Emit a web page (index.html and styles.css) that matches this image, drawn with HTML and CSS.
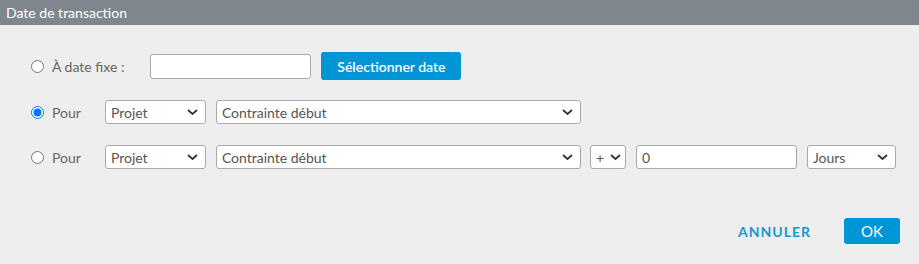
FILE: index.html
```html
<!DOCTYPE html>
<html lang="fr">
<head>
<meta charset="utf-8">
<title>Date de transaction</title>
<link rel="stylesheet" href="styles.css">
</head>
<body>
<div class="dialog">
  <div class="header">Date de transaction</div>
  <div class="content">
    <div class="row row-fixed">
      <input type="radio" name="mode" class="radio">
      <span class="label">À date fixe :</span>
      <div class="field w-date"></div>
      <button class="btn btn-primary btn-select">Sélectionner date</button>
    </div>
    <div class="row">
      <input type="radio" name="mode" class="radio" checked>
      <span class="label">Pour</span>
      <div class="select w-projet"><span>Projet</span><svg class="chev" width="11" height="6" viewBox="0 0 11 6"><path d="M1 1l4.5 4 4.5-4" fill="none" stroke="#333" stroke-width="1.8"/></svg></div>
      <div class="select w-contrainte"><span>Contrainte début</span><svg class="chev" width="11" height="6" viewBox="0 0 11 6"><path d="M1 1l4.5 4 4.5-4" fill="none" stroke="#333" stroke-width="1.8"/></svg></div>
    </div>
    <div class="row">
      <input type="radio" name="mode" class="radio">
      <span class="label">Pour</span>
      <div class="select w-projet"><span>Projet</span><svg class="chev" width="11" height="6" viewBox="0 0 11 6"><path d="M1 1l4.5 4 4.5-4" fill="none" stroke="#333" stroke-width="1.8"/></svg></div>
      <div class="select w-contrainte"><span>Contrainte début</span><svg class="chev" width="11" height="6" viewBox="0 0 11 6"><path d="M1 1l4.5 4 4.5-4" fill="none" stroke="#333" stroke-width="1.8"/></svg></div>
      <div class="select w-sign"><span>+</span><svg class="chev" width="11" height="6" viewBox="0 0 11 6"><path d="M1 1l4.5 4 4.5-4" fill="none" stroke="#333" stroke-width="1.8"/></svg></div>
      <div class="field w-num"><span>0</span></div>
      <div class="select w-unit"><span>Jours</span><svg class="chev" width="11" height="6" viewBox="0 0 11 6"><path d="M1 1l4.5 4 4.5-4" fill="none" stroke="#333" stroke-width="1.8"/></svg></div>
    </div>
  </div>
  <div class="footer">
    <button class="btn-link">ANNULER</button>
    <button class="btn btn-primary btn-ok">OK</button>
  </div>
</div>
</body>
</html>
```
FILE: styles.css
```css
* { box-sizing: border-box; }
html, body {
  margin: 0;
  padding: 0;
  background: #eeeeee;
  font-family: Lato, "Open Sans", sans-serif;
}
.dialog {
  width: 919px;
  height: 264px;
  background: #eeeeee;
}
.header {
  height: 25px;
  line-height: 25px;
  background: #7f878c;
  color: #ffffff;
  font-size: 14px;
  padding-left: 6px;
}
.content {
  padding: 27px 0 0 31px;
  display: flex;
  flex-direction: column;
}
.row {
  display: flex;
  align-items: center;
  height: 24px;
  margin-top: 21px;
}
.row-fixed {
  height: 28px;
  margin-top: 0;
}
.row-fixed + .row { margin-top: 20px; }
.radio {
  width: 13px;
  height: 13px;
  margin: 0;
  accent-color: #0075ff;
}
.label {
  margin-left: 8px;
  font-size: 14px;
  color: #666666;
  margin-right: 24px;
}
.row-fixed .label { margin-right: 26px; }
.field, .select {
  height: 24px;
  background: #ffffff;
  border: 1px solid #aaaaaa;
  border-radius: 3px;
  display: flex;
  align-items: center;
  font-size: 14px;
  color: #555555;
  padding-left: 5px;
  margin-right: 10px;
  flex: none;
}
.select {
  justify-content: space-between;
  padding-right: 7px;
}
.chev { display: block; }
.w-date { width: 161px; height: 25px; }
.w-projet { width: 101px; }
.w-contrainte { width: 365px; margin-right: 9px; }
.w-sign { width: 36px; padding-right: 4px; }
.w-num { width: 161px; }
.w-unit { width: 89px; }
.btn {
  border: none;
  border-radius: 3px;
  color: #ffffff;
  font-family: inherit;
  cursor: pointer;
}
.btn-primary { background: #0096d6; }
.btn-select {
  width: 140px;
  height: 28px;
  font-size: 14px;
  font-weight: 600;
  padding: 0;
}
.footer {
  display: flex;
  justify-content: flex-end;
  align-items: center;
  margin-top: 49px;
  padding-right: 19px;
}
.btn-link {
  background: none;
  border: none;
  color: #1a96d2;
  font-family: inherit;
  font-weight: 700;
  font-size: 14px;
  letter-spacing: 1px;
  padding: 0;
  margin-right: 33px;
}
.btn-ok {
  width: 56px;
  height: 26px;
  font-size: 15px;
  padding: 0;
}
```
